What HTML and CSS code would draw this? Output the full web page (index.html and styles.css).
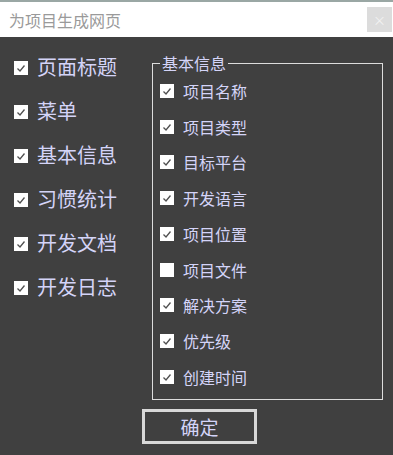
FILE: index.html
```html
<!DOCTYPE html>
<html lang="zh-CN">
<head>
  <meta charset="UTF-8" />
  <meta name="viewport" content="width=device-width, initial-scale=1" />
  <title>为项目生成网页</title>
  <link rel="stylesheet" href="styles.css">
</head>
<body>
  <div id="dialog">
    <div class="title-bar">
      <span class="title">为项目生成网页</span>
      <span class="close-btn">×</span>
    </div>

    <div class="content">
      <div class="left-col">
        <label class="option big"><span class="box on"></span>页面标题</label>
        <label class="option big"><span class="box on"></span>菜单</label>
        <label class="option big"><span class="box on"></span>基本信息</label>
        <label class="option big"><span class="box on"></span>习惯统计</label>
        <label class="option big"><span class="box on"></span>开发文档</label>
        <label class="option big"><span class="box on"></span>开发日志</label>
      </div>

      <div class="right-col">
        <fieldset class="group">
          <legend>基本信息</legend>
          <label class="option small"><span class="box on"></span>项目名称</label>
          <label class="option small"><span class="box on"></span>项目类型</label>
          <label class="option small"><span class="box on"></span>目标平台</label>
          <label class="option small"><span class="box on"></span>开发语言</label>
          <label class="option small"><span class="box on"></span>项目位置</label>
          <label class="option small"><span class="box"></span>项目文件</label>
          <label class="option small"><span class="box on"></span>解决方案</label>
          <label class="option small"><span class="box on"></span>优先级</label>
          <label class="option small"><span class="box on"></span>创建时间</label>
        </fieldset>
      </div>
    </div>

    <div class="actions">
      <button id="ok-btn">确定</button>
    </div>
  </div>
</body>
</html>
```

FILE: styles.css
```css
body {
  margin: 0;
  padding: 0;
  font-family: "Noto Sans CJK SC", "Noto Sans", sans-serif;
  background: #404040;
}

#dialog {
  width: 393px;
  height: 455px;
  background: #404040;
}

.title-bar {
  height: 35px;
  border-top: 2px solid #9aa7a4;
  background: #fff;
  display: flex;
  align-items: center;
  justify-content: space-between;
}

.title {
  margin-left: 9px;
  font-size: 16px;
  color: #9a9a9a;
  line-height: 20px;
}

.close-btn {
  width: 25px;
  height: 25px;
  margin-right: 1px;
  background: #dcdcdc;
  color: #f2f2f2;
  font-size: 13px;
  line-height: 25px;
  text-align: center;
}

.content {
  display: flex;
}

.left-col {
  width: 138px;
  padding: 7px 0 0 14px;
}

.option {
  display: flex;
  align-items: center;
  color: #d4d4f8;
}

.option.big {
  height: 44px;
  font-size: 20px;
}

.option.small {
  height: 35.75px;
  font-size: 16px;
}

.box {
  width: 14px;
  height: 14px;
  margin-right: 9px;
  background: #fff;
  flex-shrink: 0;
}

.option.big .box {
  margin-top: 3px;
}

.box.on {
  background: #fff url("data:image/svg+xml,%3Csvg xmlns='http://www.w3.org/2000/svg' width='14' height='14'%3E%3Cpath d='M3.5 7.5 L6 10 L10.5 4.5' fill='none' stroke='%23505050' stroke-width='1.3'/%3E%3C/svg%3E") no-repeat center;
}

.right-col {
  padding-top: 16px;
}

.group {
  margin: 0;
  padding: 0 0 0 7px;
  border: 1px solid #dcdcdc;
  box-sizing: border-box;
  width: 231px;
  height: 347px;
}

.group legend {
  padding: 0 2px;
  font-size: 16px;
  line-height: 20px;
  color: #d4d4f8;
}

.actions {
  padding: 9px 0 0 142px;
}

#ok-btn {
  width: 115px;
  height: 35px;
  background: #404040;
  border: 3px solid #d8d8d8;
  color: #d4d4f8;
  font-family: "Noto Sans CJK SC", sans-serif;
  font-size: 19px;
  padding: 0;
  cursor: pointer;
}
```
